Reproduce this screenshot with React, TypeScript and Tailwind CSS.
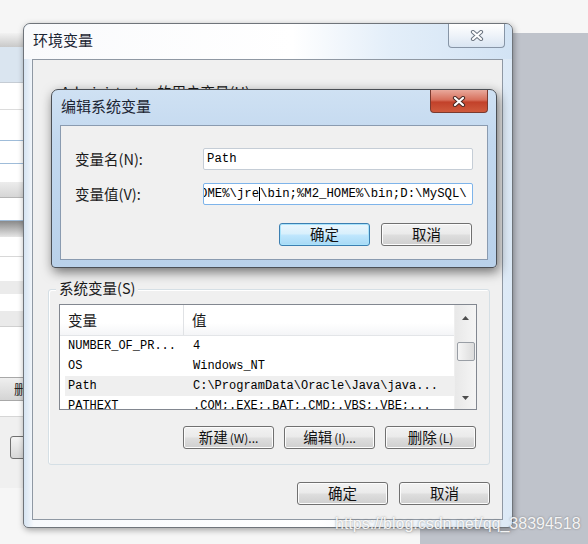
import React from 'react';

const cjk = "font-['Noto_Sans_CJK_SC','Liberation_Sans',sans-serif]";
const mono = "font-['Liberation_Mono','Noto_Sans_CJK_SC',monospace]";

const CloseGlyph = ({ outline }: { outline: string }) => (
  <svg width="14" height="11" viewBox="0 0 14 11">
    <path d="M3 2 L11 9 M11 2 L3 9" stroke={outline} strokeWidth="4.2" strokeLinecap="round" fill="none" />
    <path d="M3 2 L11 9 M11 2 L3 9" stroke="#ffffff" strokeWidth="2.2" strokeLinecap="round" fill="none" />
  </svg>
);

const WinButton = ({ children, focused = false }: { children: React.ReactNode; focused?: boolean }) => (
  <div
    className={
      'w-[91px] h-[23px] rounded-[3px] border flex items-center justify-center text-[14.5px] leading-none text-[#111] ' +
      (focused
        ? 'border-[#3c7fb1] bg-[linear-gradient(180deg,#eaf6fd_0%,#d9f0fc_45%,#bee6fd_55%,#a7d9f5_100%)] shadow-[inset_0_0_0_1px_#a9e3fb]'
        : 'border-[#707070] bg-[linear-gradient(180deg,#f2f2f2_0%,#ebebeb_45%,#dddddd_55%,#cfcfcf_100%)] shadow-[inset_0_0_0_1px_#fcfcfc]')
    }
  >
    {children}
  </div>
);

const Arrow = ({ up }: { up?: boolean }) => (
  <svg width="7" height="4" viewBox="0 0 7 4">
    <polygon points={up ? '3.5,0 7,4 0,4' : '0,0 7,0 3.5,4'} fill="#4d4d4d" />
  </svg>
);

const rows = [
  { name: 'NUMBER_OF_PR...', value: '4' },
  { name: 'OS', value: 'Windows_NT' },
  { name: 'Path', value: 'C:\\ProgramData\\Oracle\\Java\\java...', hl: true },
  { name: 'PATHEXT', value: '.COM;.EXE;.BAT;.CMD;.VBS;.VBE;...' },
];

// background window peeking out on the left
const LeftWindow = () => (
  <div className="absolute left-0 top-[33px] w-[40px] h-[455px] bg-white flex flex-col">
    <div className="h-[14px] bg-[linear-gradient(180deg,#f2f2f2,#c9c9c9)]" />
    <div className="h-[36px] bg-[#dae5f0] border-b border-[#c5ccd4]" />
    <div className="h-[27px] border-b border-[#dcdcdc]" />
    <div className="h-[31px] border-b border-[#9fbcd9]" />
    <div className="h-[23px] border-b border-[#9fbcd9]" />
    <div className="h-[18px]" />
    <div className="h-[16px] bg-[linear-gradient(180deg,#ececec,#d6d6d6)] border-b border-[#b5b5b5]" />
    <div className="h-[23px] border-b border-[#9fbcd9]" />
    <div className="h-[16px] bg-[linear-gradient(180deg,#8a8a8a,#e6e6e6)]" />
    <div className="h-[20px] border-b border-[#d8d8d8]" />
    <div className="h-[24px]" />
    <div className="h-[13px] bg-[#ebebeb]" />
    <div className="h-[17px]" />
    <div className="h-[16px] bg-[#eaeaea] border-b border-[#d0d0d0]" />
    <div className="h-[50px]" />
    <div className={'h-[24px] bg-[linear-gradient(180deg,#efefef,#d4d4d4)] border-y border-[#a8a8a8] flex items-center pl-[14px] text-[13px] text-[#222] ' + cjk}>
      删
    </div>
    <div className="h-[16px] border-b border-[#d6d6d6]" />
    <div className="flex-1 bg-[#f0f0f0] flex flex-col pt-[19px] pl-[10px]">
      <div className="h-[23px] rounded-[3px] border border-[#707070] bg-[linear-gradient(180deg,#f4f4f4,#d8d8d8)]" />
    </div>
  </div>
);

const EditDialog = () => (
  <div className="absolute left-[51px] top-[89px] w-[446px] h-[179px] rounded-t-[7px] rounded-b-[4px] border border-[#4b4f55] bg-[linear-gradient(180deg,#cfe1f3_0%,#c2d8ef_30%,#b9d1ea_100%)] shadow-[2px_4px_12px_rgba(0,0,0,0.55)] flex flex-col">
    <div className="h-[35px] flex items-start justify-between pl-[9px] pr-[8px]">
      <div className={'pt-[7px] text-[15px] leading-[18px] text-[#1b2533] ' + cjk}>编辑系统变量</div>
      <div className="w-[58px] h-[23px] rounded-b-[4px] border border-t-0 border-[#7a3a2f] bg-[linear-gradient(180deg,#e9a99c_0%,#d7705c_45%,#c2412a_55%,#cf5a3d_100%)] flex items-center justify-center">
        <CloseGlyph outline="#4a2a25" />
      </div>
    </div>
    <div className={'flex-1 mx-[8px] mb-[7px] bg-[#f0f0f0] border border-[#8a9bb0] flex flex-col pt-[22px] pl-[14px] pr-[14px] ' + cjk}>
      <div className="flex items-center h-[22px]">
        <div className="w-[128px] text-[14.5px] text-[#1a1a1a]">变量名(N):</div>
        <div className="flex-1 h-[22px] bg-white border border-[#c5cdd6] rounded-[2px] flex items-center pl-[3px]">
          <span className={'text-[12.3px] text-black ' + mono}>Path</span>
        </div>
      </div>
      <div className="flex items-center h-[22px] mt-[13px]">
        <div className="w-[128px] text-[14.5px] text-[#1a1a1a]">变量值(V):</div>
        <div className="flex-1 h-[22px] bg-white border border-[#7eb4ea] rounded-[2px] flex items-center overflow-hidden">
          <span className={'whitespace-nowrap -ml-[4px] text-[12.3px] text-black ' + mono}>
            OME%\jre<span className="inline-block w-px h-[14px] bg-black align-middle" />\bin;%M2_HOME%\bin;D:\MySQL\
          </span>
        </div>
      </div>
      <div className="flex justify-end gap-[11px] mt-[18px] pr-[1px]">
        <WinButton focused>确定</WinButton>
        <WinButton>取消</WinButton>
      </div>
    </div>
  </div>
);

const MainWindow = () => (
  <div className="absolute left-[23px] top-[23px] w-[490px] h-[505px] rounded-t-[7px] rounded-b-[5px] border border-[#6f747a] bg-[linear-gradient(90deg,#d6e4f2_0%,#f7f9fc_2%,#ffffff_60%,#dce9f6_100%)] shadow-[1px_2px_6px_rgba(0,0,0,0.35)] flex flex-col">
    <div className="h-[35px] flex items-start justify-between pl-[9px] pr-[7px] bg-[linear-gradient(90deg,#f9fafc_0%,#ffffff_55%,#e3eef9_75%,#d2e3f4_100%)] rounded-t-[7px]">
      <div className={'pt-[7px] text-[15px] leading-[18px] text-[#1b2533] ' + cjk}>环境变量</div>
      <div className="w-[57px] h-[24px] rounded-b-[4px] border border-t-0 border-[#8795a6] bg-[linear-gradient(180deg,#ffffff_0%,#eef3f9_50%,#d9e5f2_100%)] flex items-center justify-center">
        <CloseGlyph outline="#6d7682" />
      </div>
    </div>
    <div className={'flex-1 ml-[8px] mr-[9px] mb-[7px] bg-[#f0f0f0] border border-[#8f98a3] flex flex-col ' + cjk}>
      <div className="h-[229px] pl-[28px] pt-[23px]">
        <div className="text-[14.5px] leading-[18px] text-[#1a1a1a]">Administrator 的用户变量(U)</div>
      </div>
      <div className="relative ml-[15px] mr-[12px] h-[176px] border border-[#d5dfe5] rounded-[3px] shadow-[inset_1px_1px_0_#ffffff] flex flex-col pt-[14px] px-[10px]">
        <div className="absolute -top-[11px] left-[7px] px-[3px] bg-[#f0f0f0] text-[14.5px] leading-[18px] text-[#1a1a1a]">系统变量(S)</div>
        <div className="h-[106px] mr-[2px] border border-[#828790] bg-white flex overflow-hidden">
          <div className="flex-1 flex flex-col overflow-hidden">
            <div className="h-[31px] shrink-0 flex bg-[linear-gradient(180deg,#ffffff_0%,#ffffff_60%,#f4f5f7_100%)] border-b border-[#e3e5e8]">
              <div className="w-[124px] border-r border-[#e0e2e5] pl-[8px] flex items-center text-[14.5px] text-[#1a1a1a]">变量</div>
              <div className="flex-1 pl-[8px] flex items-center text-[14.5px] text-[#1a1a1a]">值</div>
            </div>
            {rows.map((r) => (
              <div key={r.name} className={'h-[20px] shrink-0 flex items-center whitespace-nowrap text-[12px] text-black ' + mono + (r.hl ? ' bg-[#efefef] ml-[5px]' : '')}>
                <div className={(r.hl ? 'w-[119px] pl-[3px]' : 'w-[124px] pl-[8px]') + ' overflow-hidden'}>{r.name}</div>
                <div className="pl-[9px]">{r.value}</div>
              </div>
            ))}
          </div>
          <div className="w-[22px] shrink-0 bg-[linear-gradient(90deg,#e8e8e8,#f5f5f5)] border-l border-[#eeeeee] flex flex-col items-center">
            <div className="h-[26px] flex items-center justify-center">
              <Arrow up />
            </div>
            <div className="mt-[11px] w-[18px] h-[19px] rounded-[2px] border border-[#999ea5] bg-[linear-gradient(90deg,#f6f6f6,#dcdcdc)]" />
            <div className="flex-1" />
            <div className="h-[22px] flex items-center justify-center">
              <Arrow />
            </div>
          </div>
        </div>
        <div className="flex justify-end gap-[10px] mt-[16px] pr-[3px]">
          <WinButton>
            新建<span className="text-[12px] ml-[2px]">(W)...</span>
          </WinButton>
          <WinButton>
            编辑<span className="text-[12px] ml-[2px]">(I)...</span>
          </WinButton>
          <WinButton>
            删除<span className="text-[12px] ml-[2px]">(L)</span>
          </WinButton>
        </div>
      </div>
      <div className="flex justify-end gap-[11px] mt-[17px] pr-[12px]">
        <WinButton>确定</WinButton>
        <WinButton>取消</WinButton>
      </div>
    </div>
  </div>
);

export default function App() {
  return (
    <div className="relative w-[588px] h-[544px] overflow-hidden bg-[#f6f6f6]">
      <div className="absolute left-[420px] top-[33px] right-0 bottom-0 bg-[#bfc3cb]" />
      <LeftWindow />
      <MainWindow />
      <EditDialog />
      <div className="absolute left-[335px] top-[515px] text-[16px] leading-[18px] font-['Liberation_Sans',sans-serif] text-white/90 [text-shadow:0_0_2px_rgba(90,90,90,0.7)]">
        https://blog.csdn.net/qq_38394518
      </div>
    </div>
  );
}
